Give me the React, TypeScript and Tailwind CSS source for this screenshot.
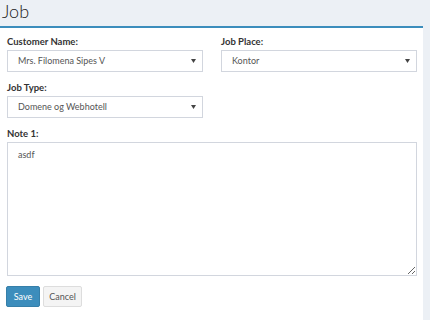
import React from "react";

const font = { fontFamily: '"Source Sans Pro", Lato, "Noto Sans", sans-serif' };

function Caret() {
  return (
    <svg width="5" height="4" viewBox="0 0 5 4" className="shrink-0">
      <path d="M0 0 L5 0 L2.5 4 Z" fill="#444" />
    </svg>
  );
}

function SelectBox({ value }: { value: string }) {
  return (
    <div className="flex h-[22px] items-center justify-between border border-[#d2d6de] bg-white pl-[10px] pr-[6px] text-[9px] text-[#555]">
      <span>{value}</span>
      <Caret />
    </div>
  );
}

function Field({ label, children }: { label: string; children: React.ReactNode }) {
  return (
    <div className="flex flex-col">
      <label className="mb-[3px] h-[10px] text-[9.5px] font-bold leading-[10px] text-[#333]">
        {label}
      </label>
      {children}
    </div>
  );
}

export default function App() {
  return (
    <div
      className="h-[320px] w-[430px] overflow-hidden bg-[#ecf0f5]"
      style={font}
    >
      {/* Page header */}
      <div className="h-[26px] pl-[2px] pt-[1px] text-[18px] font-light leading-[20px] text-[#222]">
        Job
      </div>

      {/* Box */}
      <div className="mr-[7px] h-[294px] border-t-2 border-[#3c8dbc] bg-white px-[7px] pt-[9px]">
        <div className="grid grid-cols-[196px_196px] gap-x-[18px] gap-y-[11px]">
          <Field label="Customer Name:">
            <SelectBox value="Mrs. Filomena Sipes V" />
          </Field>
          <Field label="Job Place:">
            <SelectBox value="Kontor" />
          </Field>
          <Field label="Job Type:">
            <SelectBox value="Domene og Webhotell" />
          </Field>
          <div />
        </div>

        <div className="mt-[11px] flex flex-col">
          <label className="mb-[3px] h-[10px] text-[9.5px] font-bold leading-[10px] text-[#333]">
            Note 1:
          </label>
          <textarea
            defaultValue="asdf"
            className="h-[134px] w-[410px] resize-y border border-[#d2d6de] px-[10px] py-[5px] text-[9px] text-[#555] outline-none"
            style={font}
          />
        </div>

        <div className="-ml-px mt-[10px] flex gap-[3px]">
          <button className="h-[21px] w-[34px] rounded-[2px] border border-[#367fa9] bg-[#3c8dbc] text-[9px] text-white">
            Save
          </button>
          <button className="h-[21px] w-[39px] rounded-[2px] border border-[#ddd] bg-[#f4f4f4] text-[9px] text-[#555]">
            Cancel
          </button>
        </div>
      </div>
    </div>
  );
}
